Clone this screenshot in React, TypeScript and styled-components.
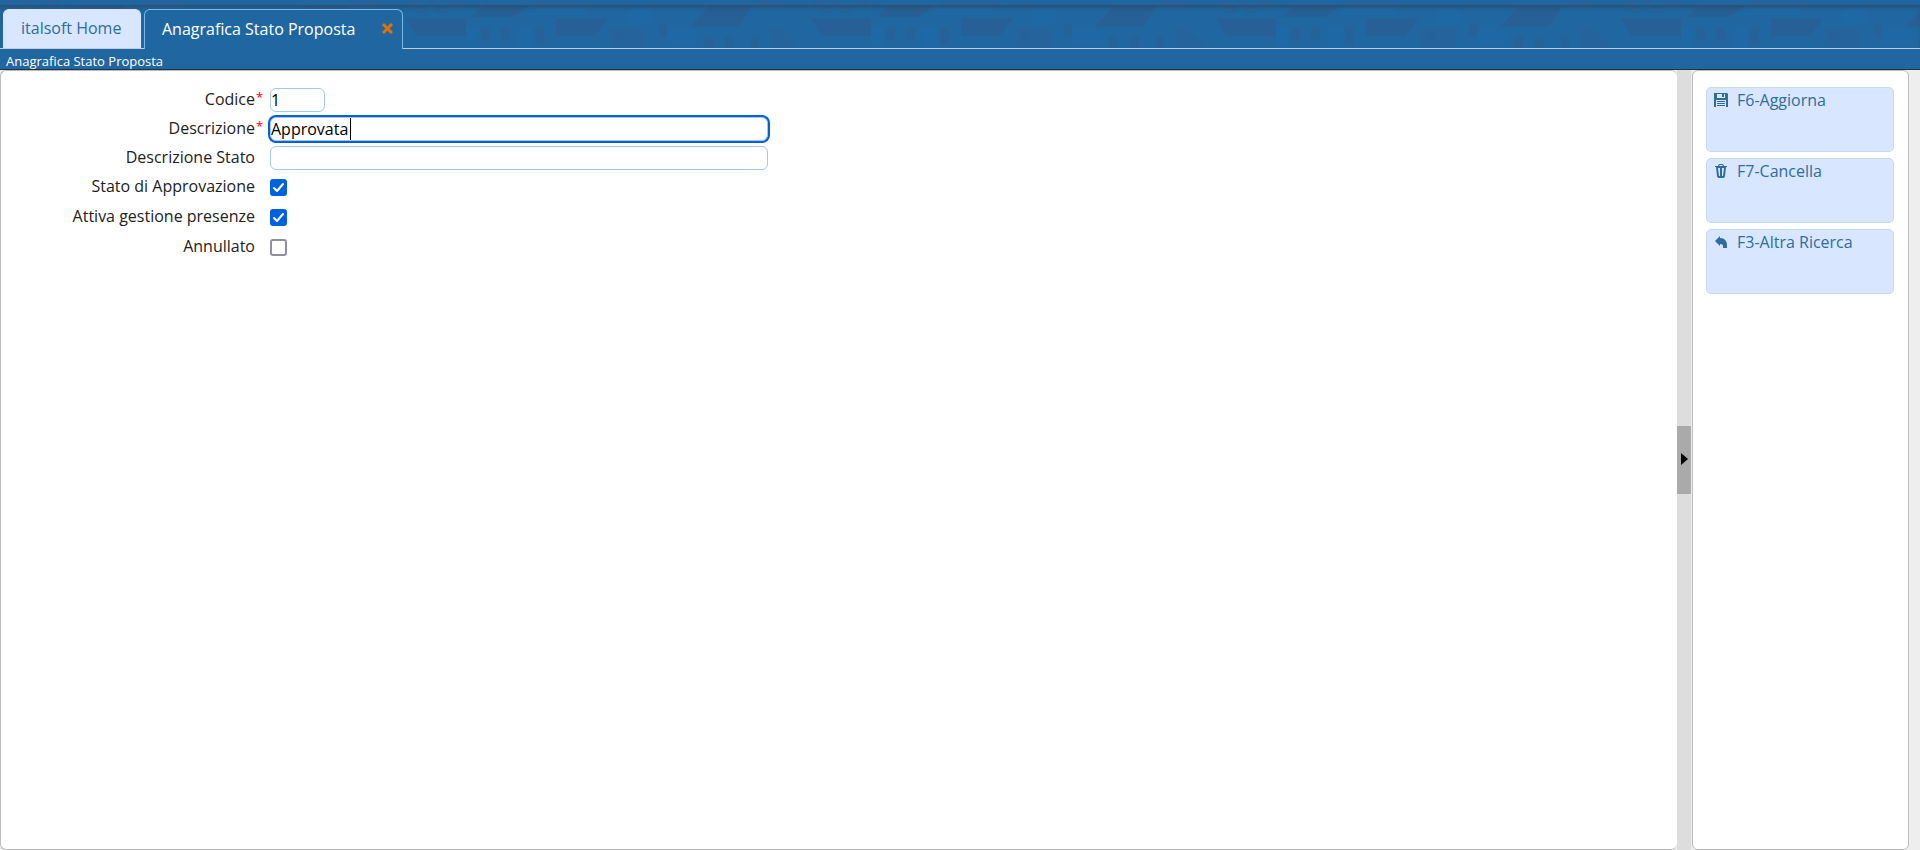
import React from "react";
import styled, { createGlobalStyle } from "styled-components";

const Global = createGlobalStyle`
  * { box-sizing: border-box; }
  html, body, #root { height: 100%; }
  body {
    margin: 0;
    background: #eeeeee;
    color: #222222;
    font-family: "Open Sans", "Noto Sans", sans-serif;
    font-size: 16px;
    line-height: 22px;
  }
  button, input { font: inherit; }
`;

const Page = styled.div`
  display: flex;
  flex-direction: column;
  min-height: 100%;
`;

const Header = styled.header`
  position: relative;
  background: #2067a1;
  padding-top: 5px;
`;

const Skyline = styled.svg`
  position: absolute;
  inset: 0;
  width: 100%;
  height: 100%;
`;

const TabBar = styled.nav`
  position: relative;
  display: flex;
  align-items: flex-end;
  gap: 3px;
  height: 44px;
  padding: 0 3px;
  border-bottom: 1px solid #c5cbd8;
  box-shadow: inset 0 5px 5px -3px #2d4d6c;
`;

const Tab = styled.div<{ $active?: boolean }>`
  display: flex;
  align-items: center;
  justify-content: space-between;
  min-width: ${(p) => (p.$active ? 259 : 138)}px;
  height: ${(p) => (p.$active ? 40 : 39)}px;
  margin-bottom: ${(p) => (p.$active ? -1 : 0)}px;
  padding: 0 ${(p) => (p.$active ? 7 : 17)}px 2px 17px;
  border: 1px solid ${(p) => (p.$active ? "#79b7e7" : "#d8e6ff")};
  border-bottom: 0;
  border-radius: 6px 6px 0 0;
  background: ${(p) => (p.$active ? "#2067a1" : "#d8e6ff")};
`;

const TabLink = styled.a<{ $active?: boolean }>`
  color: ${(p) => (p.$active ? "#ffffff" : "#2e6e9e")};
  text-decoration: none;
  white-space: nowrap;
`;

const CloseButton = styled.button`
  display: flex;
  padding: 2px;
  border: 0;
  background: none;
  color: #e17009;
`;

const TitleBar = styled.h1`
  margin: 0;
  height: 21px;
  padding: 2px 6px 0;
  border-bottom: 1px solid #26323f;
  background: #2067a1;
  color: #ffffff;
  font-size: 13px;
  font-weight: 400;
  line-height: 20px;
`;

const Workspace = styled.main`
  display: flex;
  flex: 1;
  padding-right: 11px;
`;

const Form = styled.form`
  display: flex;
  flex: 1;
  flex-direction: column;
  padding: 14px 0;
  border: 1px solid #bbbbbb;
  border-right: 0;
  border-radius: 6px;
  background: #ffffff;
`;

const Field = styled.div<{ $check?: boolean }>`
  display: flex;
  align-items: center;
  height: ${(p) => (p.$check ? 30 : 29)}px;
`;

const Label = styled.label`
  width: 254px;
  padding-bottom: 2px;
  text-align: right;
`;

const Mark = styled.span`
  width: 15px;
  padding: 0 0 6px 1px;
  color: #ff0000;
  font-size: 13px;
`;

const InputBox = styled.span`
  position: relative;
  display: flex;
`;

const TextInput = styled.input<{ $short?: boolean }>`
  width: ${(p) => (p.$short ? 55 : 498)}px;
  height: 24px;
  padding: 1px 0;
  border: 1px solid #a6c9e2;
  border-radius: 6px;
  background: #ffffff;
  color: #000000;
  caret-color: transparent;
  outline: none;
  &:focus { box-shadow: 0 0 0 2px #0061e0; }
`;

const Caret = styled.span`
  position: absolute;
  top: 1px;
  left: 80px;
  width: 1px;
  height: 22px;
  background: #000000;
`;

const CheckInput = styled.input`
  appearance: none;
  width: 17px;
  height: 17px;
  margin: 0;
  border: 2px solid #8f8f9d;
  border-radius: 3px;
  background: #ffffff;
  &:checked {
    border-color: #0061e0;
    background: #0061e0;
  }
`;

const Tick = styled.svg`
  position: absolute;
  inset: 0;
  pointer-events: none;
`;

const Splitter = styled.div`
  display: flex;
  align-items: center;
  width: 14px;
  margin-right: 1px;
  background: #dddddd;
`;

const SplitterButton = styled.button`
  display: flex;
  align-items: center;
  justify-content: center;
  width: 14px;
  height: 68px;
  padding: 0 0 2px;
  border: 0;
  background: #aaaaaa;
`;

const Actions = styled.aside`
  display: flex;
  flex-direction: column;
  gap: 6px;
  width: 217px;
  padding: 16px 14px 16px 13px;
  border: 1px solid #bbbbbb;
  border-radius: 6px;
  background: #ffffff;
`;

const ActionButton = styled.button`
  display: flex;
  align-items: flex-start;
  gap: 9px;
  height: 65px;
  padding: 1px 7px;
  border: 1px solid #c5dbec;
  border-radius: 5px;
  background: #d8e6ff;
  color: #2e6e9e;
  text-align: left;
`;

const ActionIcon = styled.svg`
  flex: none;
  margin-top: 4px;
  fill: currentColor;
`;

function SkylinePattern() {
  return (
    <Skyline aria-hidden="true">
      <defs>
        <pattern id="skyline" width="405" height="50" patternUnits="userSpaceOnUse">
          <g fill="#266096">
            <path d="M0 18h61v18H11zM151 18h53l-14 18h-39z" />
            <path d="M80 5h45l-14 12H66zM305 5h43l-14 22h-50z" />
          </g>
          <g fill="#24639b">
            <path d="M3 0h10v5H3zM22 0h10v5H22zM45 0h14v5H45zM130 0h50l12 5h-60zM350 0h24l8 5h-28z" />
            <path d="M10 5h12v8H10zM30 5h12v8H30zM205 28h35v20h-35zM365 28q20 0 30 20h-30z" />
          </g>
          <g fill="#25629a">
            <path d="M76 28h9v12h-9zM96 28h9v12h-9zM130 28h9v17h-9zM211 32q4-3 8 0v8h-8zM254 24q4-3 8 0v12h-8z" />
            <path d="M299 37h9v11h-9zM320 37h9v11h-9zM346 36h8v12h-8z" />
          </g>
          <path fill="#1e69a5" d="M127 5h55v10h-58zM61 28h12v18H61zM112 28h15v20h-15zM222 8h24v16h-24zM262 30h30v14h-30z" />
        </pattern>
      </defs>
      <rect width="100%" height="100%" fill="url(#skyline)" />
    </Skyline>
  );
}

const actions = [
  {
    label: "F6-Aggiorna",
    icon: (
      <path
        fillRule="evenodd"
        d="M0 0h13l1 1v13h-2V7H2v7H0zM3 1v4h8V1zM8 1h2v3H8zM3 8h8v1H3zM3 10h8v1H3zM3 12h8v1H3z"
      />
    ),
  },
  {
    label: "F7-Cancella",
    icon: (
      <path
        fillRule="evenodd"
        d="M1 2h3q0-2 2-2h2q2 0 2 2h3v1h-1l-1 9q0 2-2 2H5q-2 0-2-2L2 3H1zM5 2h4l-1-1H6zM4 4l1 8h1V4zM8 4v8h1l1-8z"
      />
    ),
  },
  {
    label: "F3-Altra Ricerca",
    icon: <path d="M1 6l5-5v2q7 0 7 8v2H9v-2q0-2-3-2v2z" />,
  },
];

type TextFieldProps = {
  id: string;
  label: string;
  value?: string;
  required?: boolean;
  short?: boolean;
  focus?: boolean;
};

function TextField(p: TextFieldProps) {
  return (
    <Field>
      <Label htmlFor={p.id}>{p.label}</Label>
      <Mark>{p.required && "*"}</Mark>
      <InputBox>
        <TextInput id={p.id} $short={p.short} defaultValue={p.value} required={p.required} autoFocus={p.focus} />
        {p.focus && <Caret />}
      </InputBox>
    </Field>
  );
}

function CheckField(p: { id: string; label: string; checked?: boolean }) {
  return (
    <Field $check>
      <Label htmlFor={p.id}>{p.label}</Label>
      <Mark />
      <InputBox>
        <CheckInput type="checkbox" id={p.id} defaultChecked={p.checked} />
        {p.checked && (
          <Tick width="17" height="17" viewBox="0 0 17 17">
            <path d="M4 9l3 3 6-7" fill="none" stroke="#fff" strokeWidth="2" strokeLinecap="round" strokeLinejoin="round" />
          </Tick>
        )}
      </InputBox>
    </Field>
  );
}

export default function App() {
  return (
    <Page>
      <Global />
      <Header>
        <SkylinePattern />
        <TabBar>
          <Tab>
            <TabLink href="#home">italsoft Home</TabLink>
          </Tab>
          <Tab $active>
            <TabLink href="#stato" $active>Anagrafica Stato Proposta</TabLink>
            <CloseButton aria-label="Chiudi">
              <svg width="11" height="11" viewBox="0 0 11 11">
                <path d="M1 1l9 9M10 1l-9 9" stroke="currentColor" strokeWidth="3" />
              </svg>
            </CloseButton>
          </Tab>
        </TabBar>
      </Header>
      <TitleBar>Anagrafica Stato Proposta</TitleBar>
      <Workspace>
        <Form>
          <TextField id="codice" label="Codice" value="1" required short />
          <TextField id="descrizione" label="Descrizione" value="Approvata" required focus />
          <TextField id="descrizione-stato" label="Descrizione Stato" />
          <CheckField id="approvazione" label="Stato di Approvazione" checked />
          <CheckField id="presenze" label="Attiva gestione presenze" checked />
          <CheckField id="annullato" label="Annullato" />
        </Form>
        <Splitter>
          <SplitterButton aria-label="Riduci pannello">
            <svg width="7" height="12" viewBox="0 0 7 12"><path d="M0 0l7 6-7 6z" /></svg>
          </SplitterButton>
        </Splitter>
        <Actions>
          {actions.map((a) => (
            <ActionButton key={a.label}>
              <ActionIcon width="14" height="14" viewBox="0 0 14 14">{a.icon}</ActionIcon>
              {a.label}
            </ActionButton>
          ))}
        </Actions>
      </Workspace>
    </Page>
  );
}
